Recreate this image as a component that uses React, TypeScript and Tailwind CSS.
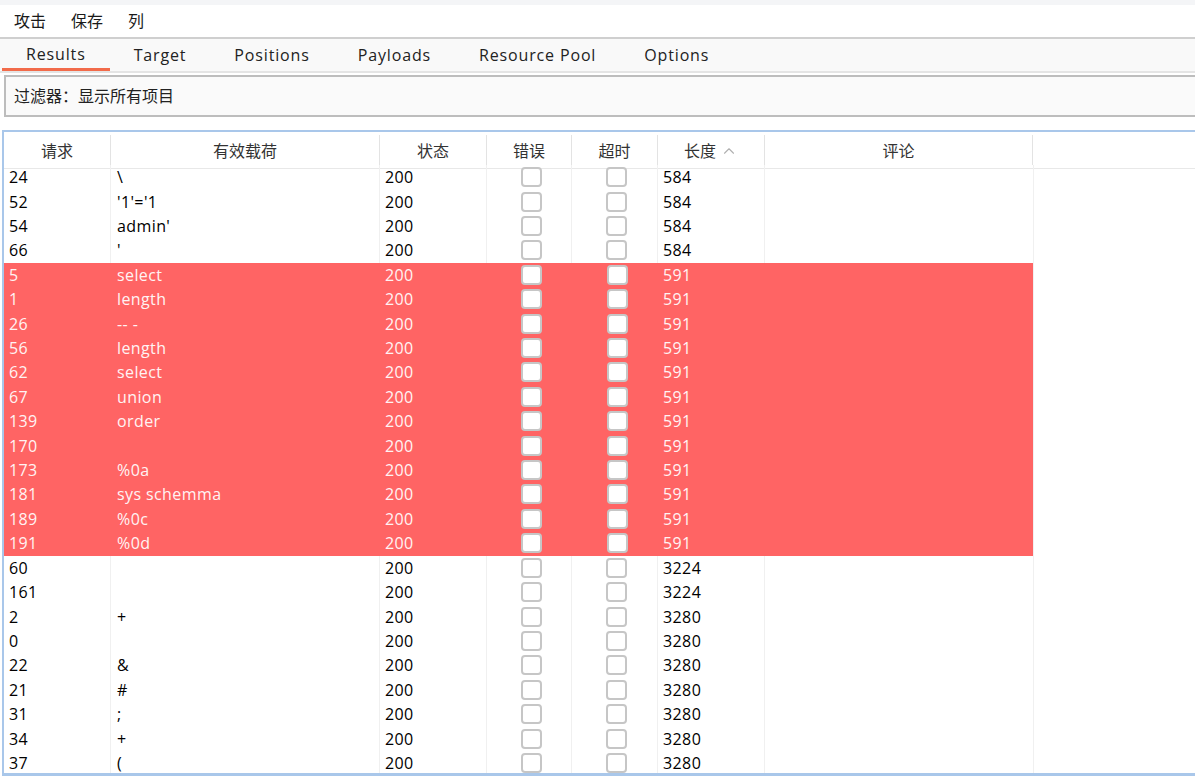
import { ChevronUp } from "lucide-react";

type Row = { id: string; payload: string; status: string; length: string; hit?: boolean };

const rows: Row[] = [
  { id: "24", payload: "\\", status: "200", length: "584" },
  { id: "52", payload: "'1'='1", status: "200", length: "584" },
  { id: "54", payload: "admin'", status: "200", length: "584" },
  { id: "66", payload: "'", status: "200", length: "584" },
  { id: "5", payload: "select", status: "200", length: "591", hit: true },
  { id: "1", payload: "length", status: "200", length: "591", hit: true },
  { id: "26", payload: "-- -", status: "200", length: "591", hit: true },
  { id: "56", payload: "length", status: "200", length: "591", hit: true },
  { id: "62", payload: "select", status: "200", length: "591", hit: true },
  { id: "67", payload: "union", status: "200", length: "591", hit: true },
  { id: "139", payload: "order", status: "200", length: "591", hit: true },
  { id: "170", payload: "", status: "200", length: "591", hit: true },
  { id: "173", payload: "%0a", status: "200", length: "591", hit: true },
  { id: "181", payload: "sys schemma", status: "200", length: "591", hit: true },
  { id: "189", payload: "%0c", status: "200", length: "591", hit: true },
  { id: "191", payload: "%0d", status: "200", length: "591", hit: true },
  { id: "60", payload: "", status: "200", length: "3224" },
  { id: "161", payload: "", status: "200", length: "3224" },
  { id: "2", payload: "+", status: "200", length: "3280" },
  { id: "0", payload: "", status: "200", length: "3280" },
  { id: "22", payload: "&", status: "200", length: "3280" },
  { id: "21", payload: "#", status: "200", length: "3280" },
  { id: "31", payload: ";", status: "200", length: "3280" },
  { id: "34", payload: "+", status: "200", length: "3280" },
  { id: "37", payload: "(", status: "200", length: "3280" },
];

const tabs = ["Results", "Target", "Positions", "Payloads", "Resource Pool", "Options"];

function Box() {
  return <span className="block h-[20px] w-[21px] rounded-[4px] border-2 border-[#c6c6c6] bg-white" />;
}

export default function App() {
  return (
    <div
      className="h-[776px] w-[1195px] overflow-hidden bg-white text-[16px] text-black"
      style={{ fontFamily: '"Open Sans", "Noto Sans CJK SC", sans-serif' }}
    >
      <div className="h-[5px] bg-[#f4f5f7]" />

      {/* menu */}
      <div className="flex h-[32px] items-center gap-[25px] px-[14px] text-[16px] text-[#1a1a1a]">
        <span>攻击</span>
        <span>保存</span>
        <span>列</span>
      </div>

      {/* tabs */}
      <div className="flex h-[36px] border-t-2 border-b-2 border-t-[#cfcfcf] border-b-[#e4e4e4] bg-[#f9f9f9] pl-[2px]">
        {tabs.map((t, i) => (
          <div
            key={t}
            className={
              "flex items-center px-[24px] text-[16px] tracking-[0.85px] text-[#222] " +
              (i === 0 ? "border-b-[3px] border-[#f26b4a]" : "")
            }
          >
            {t}
          </div>
        ))}
      </div>

      {/* filter */}
      <div className="mt-[2px] ml-[4px] flex h-[42px] items-center border-2 border-r-0 border-[#bdbdbd] bg-[#fafafa] pl-[8px] text-[16px] text-[#222]">
        过滤器：显示所有项目
      </div>

      {/* table */}
      <div className="mt-[13px] ml-[2px] h-[646px] overflow-hidden border-t-2 border-l-2 border-b-[3px] border-[#a9c7ea]">
        <div className="flex h-[37px] border-b border-[#e8e8e8] text-[16px] text-[#333]">
          {[
            ["请求", "w-[107px]"],
            ["有效载荷", "w-[269px]"],
            ["状态", "w-[107px]"],
            ["错误", "w-[85px]"],
            ["超时", "w-[86px]"],
            ["长度", "w-[107px]"],
            ["评论", "w-[268px]"],
          ].map(([h, w]) => (
            <div key={h} className={w + " my-[3px] flex items-center justify-center border-r border-[#e3e3e3] pt-[1px]"}>
              {h}
              {h === "长度" && <ChevronUp className="ml-[4px] h-[18px] w-[18px] text-[#b0b0b0]" strokeWidth={1.5} />}
            </div>
          ))}
        </div>

        <div className="-mt-[4px]">
          {rows.map((r, i) => (
            <div key={i} className="flex h-[24.42px] items-center text-[16px] tracking-[0.4px]">
              <div
                className={
                  "flex h-full w-[1029px] items-center " +
                  (r.hit ? "bg-[#ff6464] text-[#fff3f3]" : "text-black")
                }
              >
                <div className={"flex h-full w-[107px] items-center pl-[5px] " + (r.hit ? "" : "border-r border-[#f0f0f0]")}>{r.id}</div>
                <div className={"flex h-full w-[269px] items-center pl-[6px] whitespace-pre " + (r.hit ? "" : "border-r border-[#f0f0f0]")}>{r.payload}</div>
                <div className={"flex h-full w-[107px] items-center pl-[5px] " + (r.hit ? "" : "border-r border-[#f0f0f0]")}>{r.status}</div>
                <div className={"flex h-full w-[85px] items-center justify-center pl-[4px] " + (r.hit ? "" : "border-r border-[#f0f0f0]")}><Box /></div>
                <div className={"flex h-full w-[86px] items-center justify-center pl-[4px] " + (r.hit ? "" : "border-r border-[#f0f0f0]")}><Box /></div>
                <div className={"flex h-full w-[107px] items-center pl-[5px] " + (r.hit ? "" : "border-r border-[#f0f0f0]")}>{r.length}</div>
                <div className="h-full w-[268px]" />
              </div>
              <div className="h-full border-l border-[#f0f0f0]" />
            </div>
          ))}
        </div>
      </div>
    </div>
  );
}
